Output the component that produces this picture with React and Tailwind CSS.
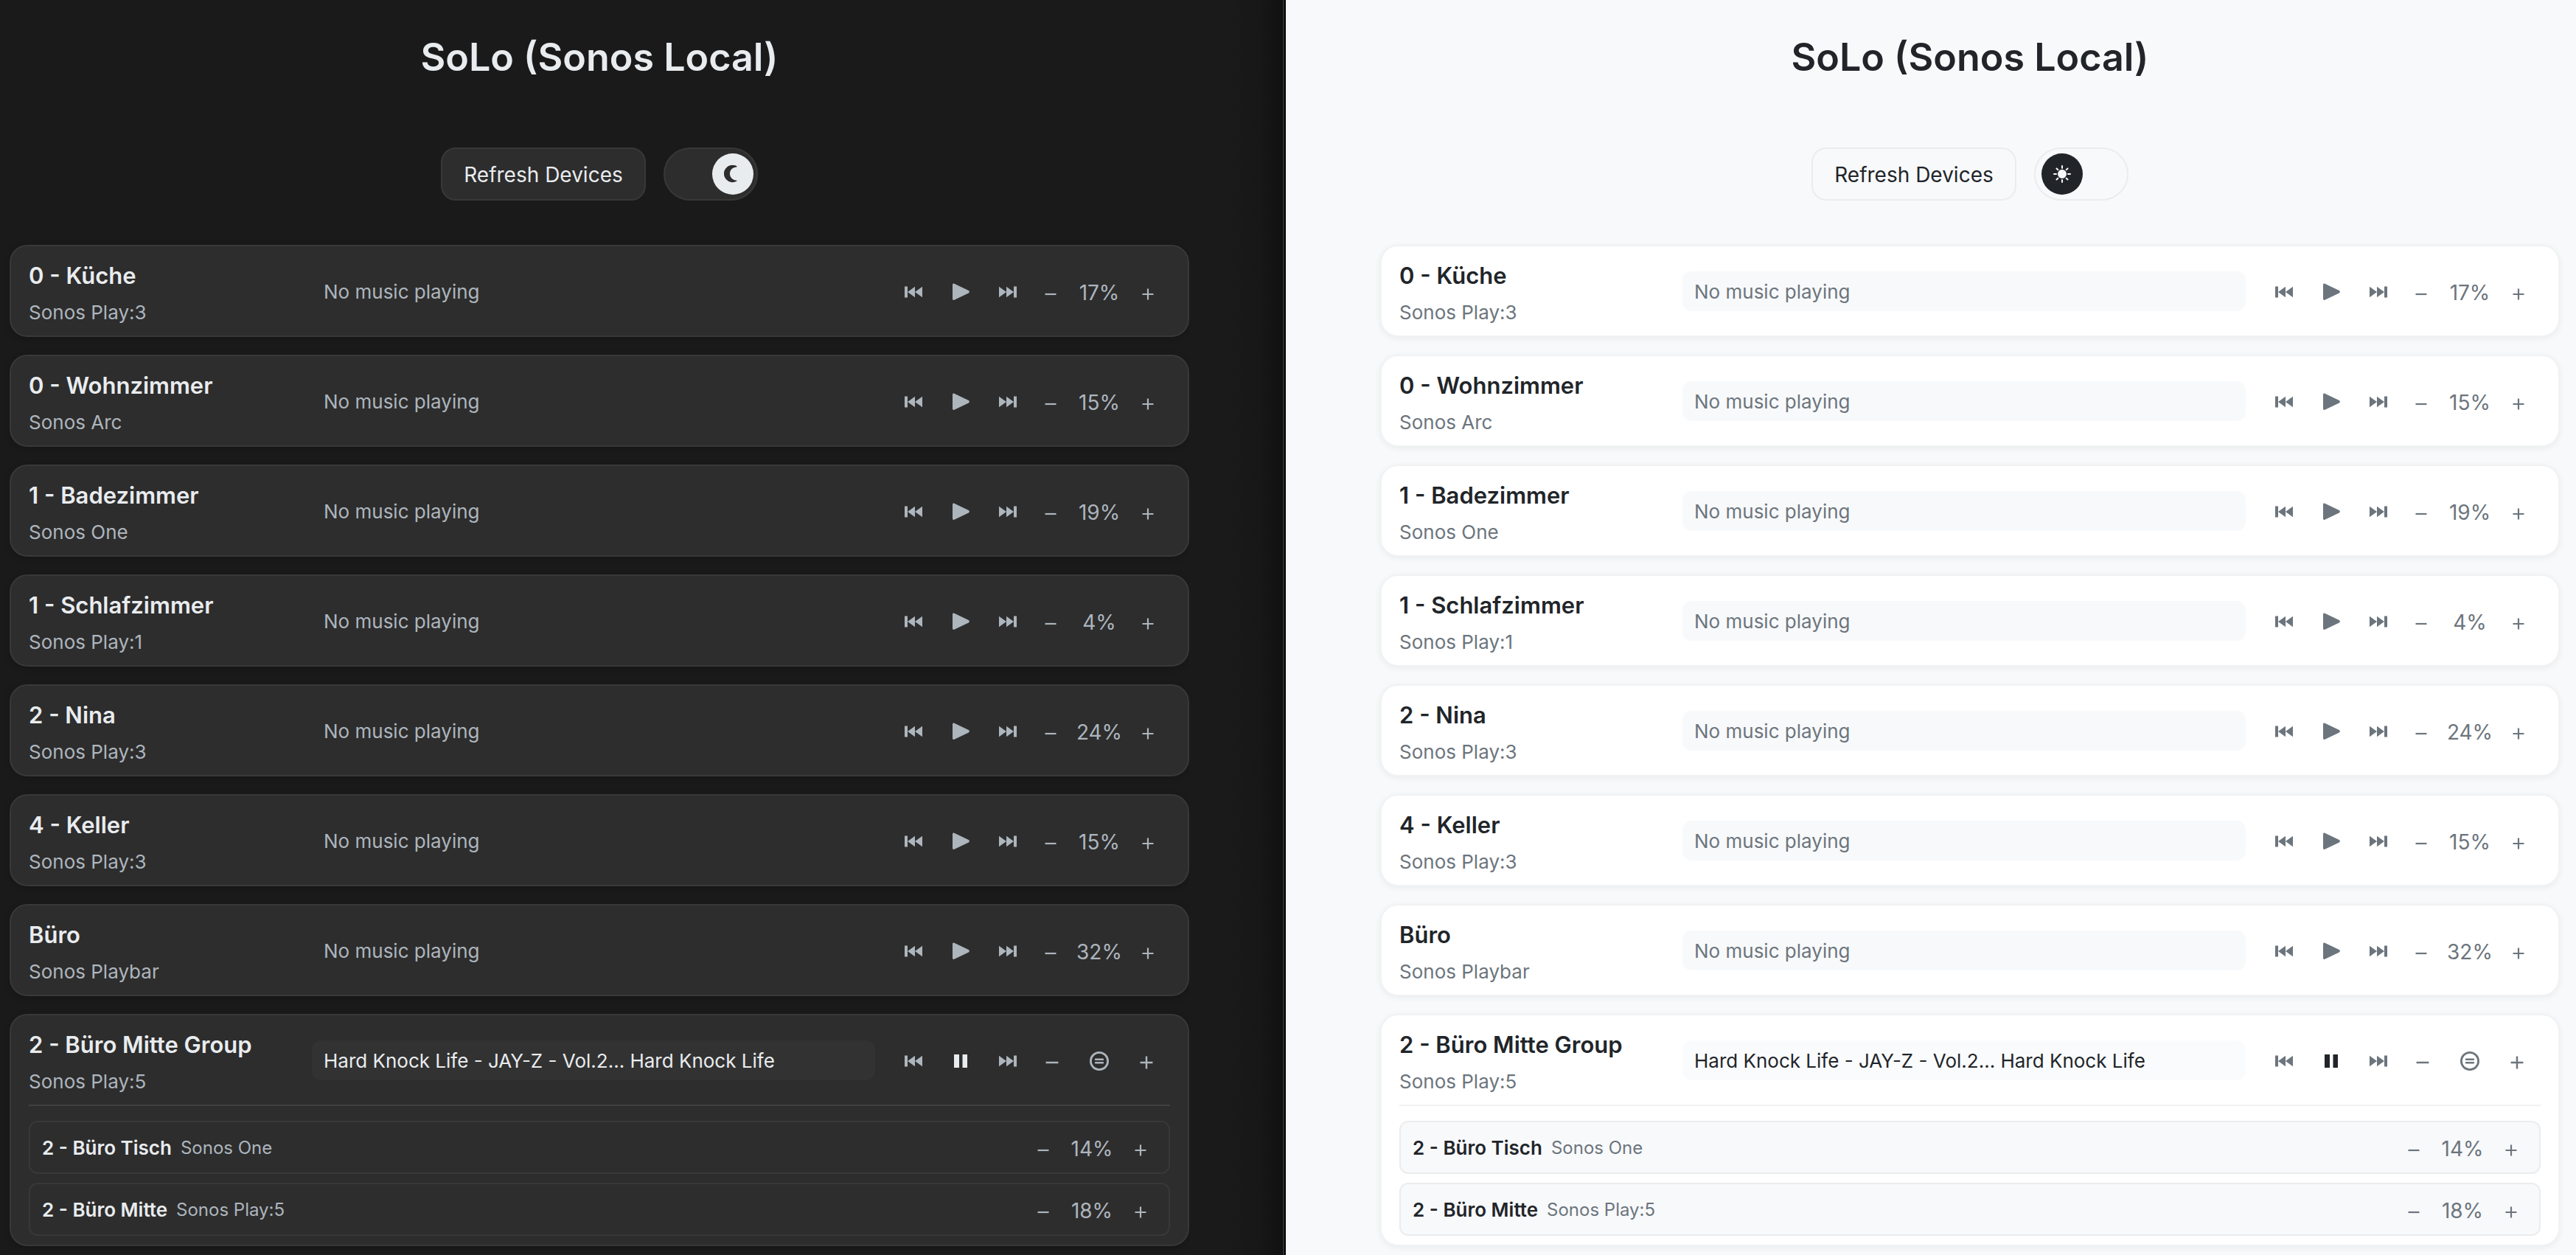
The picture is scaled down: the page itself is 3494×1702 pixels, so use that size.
import React from "react";
import clsx from "clsx";

const DEVICES = [
  { name: "0 - Küche", model: "Sonos Play:3", volume: "17%" },
  { name: "0 - Wohnzimmer", model: "Sonos Arc", volume: "15%" },
  { name: "1 - Badezimmer", model: "Sonos One", volume: "19%" },
  { name: "1 - Schlafzimmer", model: "Sonos Play:1", volume: "4%" },
  { name: "2 - Nina", model: "Sonos Play:3", volume: "24%" },
  { name: "4 - Keller", model: "Sonos Play:3", volume: "15%" },
  { name: "Büro", model: "Sonos Playbar", volume: "32%" },
  {
    name: "2 - Büro Mitte Group",
    model: "Sonos Play:5",
    track: "Hard Knock Life - JAY-Z - Vol.2... Hard Knock Life",
    members: [
      { name: "2 - Büro Tisch", model: "Sonos One", volume: "14%" },
      { name: "2 - Büro Mitte", model: "Sonos Play:5", volume: "18%" },
    ],
  },
];

const THEMES = {
  dark: {
    text: "text-[#e9ecef]",
    muted: "text-[#adb5bd]",
    control: "bg-[#2d2d2d] border-[#383838]",
    knob: "bg-[#e9ecef] text-[#2d2d2d]",
    card: "bg-[#2d2d2d] border-[#383838] shadow-[0_2px_8px_rgba(0,0,0,0.2)]",
    idle: "",
    playing: "bg-[#323232]",
    divider: "border-[#404040]",
    member: "border-[#383838]",
  },
  light: {
    text: "text-[#212529]",
    muted: "text-[#6c757d]",
    control: "bg-[#f8f9fb] border-[#ebeced]",
    knob: "bg-[#212529] text-[#f8f9fb]",
    card: "bg-white border-[#f1f2f3] shadow-[0_2px_8px_rgba(0,0,0,0.06)]",
    idle: "bg-[#f8f9fb]",
    playing: "bg-[#fafbfd]",
    divider: "border-[#f1f2f3]",
    member: "bg-[#f8f9fb] border-[#ebeced]",
  },
};

const PreviousIcon = () => (
  <svg viewBox="0 0 24 16" className="h-4 w-6" fill="currentColor" aria-hidden="true">
    <path d="M0 0.5h4v15H0zM14 0.8v14.4L4 8zM24 0.8v14.4L14 8z" />
  </svg>
);

const NextIcon = () => (
  <svg viewBox="0 0 24 16" className="h-4 w-6" fill="currentColor" aria-hidden="true">
    <path d="M24 0.5h-4v15h4zM10 0.8v14.4L20 8zM0 0.8v14.4L10 8z" />
  </svg>
);

const PlayIcon = () => (
  <svg viewBox="0 0 24 24" className="size-6" fill="currentColor" aria-hidden="true">
    <path d="M1 2.2C1 .9 2.2.2 3.4.8L22.8 10.100c1.4.7 1.4 2.6 0 3.3L3.4 22.700C2.2 23.3 1 22.6 1 21.3z" />
  </svg>
);

const PauseIcon = () => (
  <svg viewBox="0 0 24 24" className="size-6" fill="currentColor" aria-hidden="true">
    <path d="M3 3h7v18H3zM14.500 3h6.500v18h-6.500z" />
  </svg>
);

const EqualizeIcon = () => (
  <svg viewBox="0 0 28 28" className="size-7" fill="none" stroke="currentColor" aria-hidden="true">
    <circle cx="14" cy="14" r="11.600" strokeWidth="2.800" />
    <path d="M9 11.700h10M9 16.300h10" strokeWidth="2.400" strokeLinecap="round" />
  </svg>
);

const MinusIcon = ({ large }) => (
  <svg viewBox="0 0 16 16" className={large ? "size-[18px]" : "size-4"} stroke="currentColor" strokeWidth="2.200" aria-hidden="true">
    <path d="M0.500 8h15" />
  </svg>
);

const PlusIcon = ({ large }) => (
  <svg viewBox="0 0 16 16" className={large ? "size-[18px]" : "size-4"} stroke="currentColor" strokeWidth="2.200" aria-hidden="true">
    <path d="M0.500 8h15M8 0.500v15" />
  </svg>
);

const MoonIcon = () => (
  <svg viewBox="0 0 24 24" className="size-6" fill="currentColor" aria-hidden="true">
    <path d="M17.500 1.400A11.700 11.700 0 1 0 17.500 21.600Q18 20.600 17 20.700A9 9 0 0 1 17 2.400Q18 2.300 17.500 1.400z" />
  </svg>
);

const SunIcon = () => (
  <svg viewBox="0 0 24 24" className="size-6" fill="currentColor" stroke="currentColor" strokeWidth="2" strokeLinecap="round" aria-hidden="true">
    <circle cx="12" cy="12" r="5" />
    <path d="M12 1v3M12 20v3M1 12h3M20 12h3M4.500 4.500l1.800 1.800M17.700 17.700l1.800 1.800M4.500 19.500l1.800-1.800M17.700 6.300l1.800-1.800" />
  </svg>
);

function IconButton({ label, className, children }) {
  return (
    <button type="button" aria-label={label} className={clsx("flex h-12 items-center justify-center", className)}>
      {children}
    </button>
  );
}

function Volume({ value }) {
  return (
    <div className="flex items-center pt-0.5">
      <IconButton label="Volume down" className="w-15 pt-1.5"><MinusIcon /></IconButton>
      <span className="w-18 pt-0.5 text-center text-[28px] leading-9">{value}</span>
      <IconButton label="Volume up" className="w-15 pt-1.5"><PlusIcon /></IconButton>
    </div>
  );
}

function GroupVolume() {
  return (
    <div className="flex items-center gap-2 px-1">
      <IconButton label="Group volume down" className="w-14 pt-1.5"><MinusIcon large /></IconButton>
      <IconButton label="Equalize group volume" className="w-14 pt-0.5"><EqualizeIcon /></IconButton>
      <IconButton label="Group volume up" className="w-14 pt-1.5"><PlusIcon large /></IconButton>
    </div>
  );
}

function DeviceCard({ device, theme }) {
  const playing = Boolean(device.track);
  return (
    <li className={clsx("rounded-3xl border-2 px-6", theme.card)}>
      <div className="flex h-[121px] items-center gap-6">
        <div className="w-[360px] shrink-0 pt-2">
          <h2 className="text-[31px] leading-[50px] font-semibold">{device.name}</h2>
          <p className={clsx("text-[26px] leading-[50px]", theme.muted)}>{device.model}</p>
        </div>
        <p
          className={clsx(
            "min-w-0 flex-1 truncate rounded-xl px-4 pt-2.5 pb-2 text-[26px] leading-9",
            playing ? theme.playing : clsx(theme.idle, theme.muted),
          )}
        >
          {device.track || "No music playing"}
        </p>
        <div className={clsx("flex shrink-0 items-center", theme.muted)}>
          <div className="flex items-center gap-2 pt-0.5">
            <IconButton label="Previous track" className="w-14"><PreviousIcon /></IconButton>
            <IconButton label={playing ? "Pause" : "Play"} className={clsx("w-14", playing && theme.text)}>
              {playing ? <PauseIcon /> : <PlayIcon />}
            </IconButton>
            <IconButton label="Next track" className="w-14"><NextIcon /></IconButton>
          </div>
          {device.members ? <GroupVolume /> : <Volume value={device.volume} />}
        </div>
      </div>
      {device.members && (
        <ul className={clsx("flex flex-col gap-3 border-t-2 pt-5 pb-3", theme.divider)}>
          {device.members.map((member) => (
            <li key={member.name} className={clsx("flex h-18 items-center gap-3 rounded-xl border-2 pr-2 pl-4", theme.member)}>
              <h3 className="pt-0.5 text-[26px] leading-9 font-semibold">{member.name}</h3>
              <p className={clsx("flex-1 pt-0.5 text-2xl leading-9", theme.muted)}>{member.model}</p>
              <div className={theme.muted}>
                <Volume value={member.volume} />
              </div>
            </li>
          ))}
        </ul>
      )}
    </li>
  );
}

function Player({ mode, className }) {
  const theme = THEMES[mode];
  const dark = mode === "dark";
  return (
    <section className={clsx("min-h-screen pb-3", theme.text, className)}>
      <h1 className="pt-10 text-center text-[52px] leading-[76px] font-semibold">SoLo (Sonos Local)</h1>
      <div className="mt-[84px] flex justify-center gap-6">
        <button type="button" className={clsx("h-18 w-[278px] rounded-[20px] border-2 pt-0.5 text-[28px]", theme.control)}>
          Refresh Devices
        </button>
        <button
          type="button"
          role="switch"
          aria-checked={dark}
          aria-label="Dark mode"
          className={clsx("flex h-18 w-32 items-center rounded-full border-2", dark ? "justify-end pr-1" : "pl-2", theme.control)}
        >
          <span className={clsx("flex size-14 items-center justify-center rounded-full", theme.knob)}>
            {dark ? <MoonIcon /> : <SunIcon />}
          </span>
        </button>
      </div>
      <ul className="mt-15 flex flex-col gap-6">
        {DEVICES.map((device) => (
          <DeviceCard key={device.name} device={device} theme={theme} />
        ))}
      </ul>
    </section>
  );
}

export default function App() {
  return (
    <main className="grid grid-cols-[1744fr_1750fr] font-[Inter,'Liberation_Sans',sans-serif]">
      <div className="flex border-r-2 border-black bg-[#1a1a1a]">
        <Player mode="dark" className="min-w-0 flex-1 pl-[13px]" />
        <div className="w-[129px] border-r-2 border-[#2e2e2e] bg-linear-to-r from-[#1a1a1a] from-40% via-[#171717] via-75% to-[#111111]" />
      </div>
      <Player mode="light" className="min-w-0 bg-[#f8f9fb] pr-[22px] pl-[128px]" />
    </main>
  );
}
